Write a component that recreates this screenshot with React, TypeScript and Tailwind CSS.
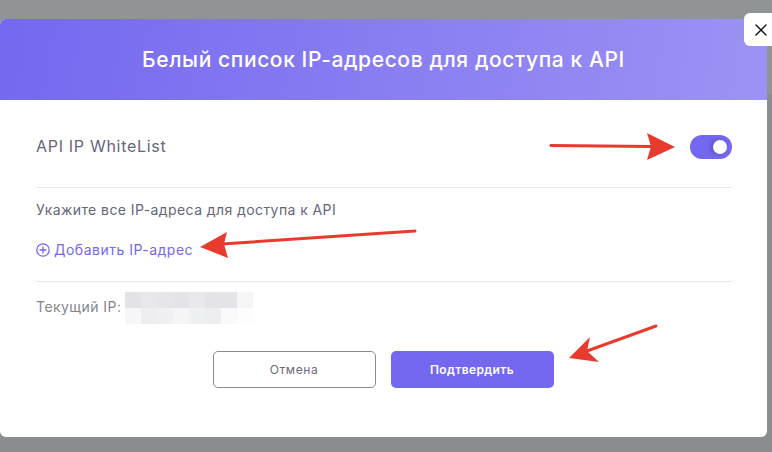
import React from "react";
import { X } from "lucide-react";

const font = "font-['Inter','Liberation_Sans',sans-serif]";

const blurTop = ["bg-[#e2e2e7]", "bg-[#e8e8eb]", "bg-[#e6e6ea]", "bg-[#e3e3e8]", "bg-[#e9e9ec]", "bg-[#e3e3e8]", "bg-[#e5e5e9]", "bg-[#f6f6f7]"];
const blurBottom = ["bg-[#f6f6f8]", "bg-[#eeeef0]", "bg-[#f0f0f2]", "bg-[#f5f5f6]", "bg-[#eff0f1]", "bg-[#eeeef0]", "bg-[#fafafa]", "bg-[#fdfdfd]"];

const Arrows: React.FC = () => (
  <svg className="pointer-events-none absolute left-0 top-0" width="772" height="452" viewBox="0 0 772 452" fill="none">
    <path d="M551 145.5 L652 146.5" stroke="#e83b2e" strokeWidth="3" strokeLinecap="round" />
    <path d="M675 147 L647 133 L651 146.5 L647 160 Z" fill="#e83b2e" />
    <path d="M415 231 L222 244" stroke="#e83b2e" strokeWidth="3" strokeLinecap="round" />
    <path d="M200 247 L227 232 L224 244 L228 258 Z" fill="#e83b2e" />
    <path d="M656 326 L587 351" stroke="#e83b2e" strokeWidth="3" strokeLinecap="round" />
    <path d="M569 358 L590 337 L587 351 L599 362 Z" fill="#e83b2e" />
  </svg>
);

const App: React.FC = () => {
  return (
    <div className={`relative h-[452px] w-[772px] overflow-hidden bg-[linear-gradient(#919496_94px,#8b8e90_94px)] pt-[19px] ${font}`}>
      <div className="h-[418px] w-[767px] overflow-hidden rounded-md bg-white">
        <div className="flex h-[81px] items-center justify-center bg-[linear-gradient(100deg,#7468f0,#9d92f4)]">
          <h2 className="text-[21px] font-medium tracking-[0.6px] text-white">Белый список IP-адресов для доступа к API</h2>
        </div>

        <div className="pl-[36px] pr-[35px]">
          <div className="flex h-[88px] items-center justify-between border-b border-[#e9e9ec] pt-[6px]">
            <span className="pb-[2px] text-[16px] tracking-[0.7px] text-[#666679]">API IP WhiteList</span>
            <div className="flex h-[24px] w-[42px] items-center justify-end rounded-full bg-[#7468f0] pr-[5px]">
              <div className="h-[14px] w-[14px] rounded-full bg-white shadow-[-2px_0_4px_rgba(40,30,120,0.35)]" />
            </div>
          </div>

          <div className="h-[94px] border-b border-[#e9e9ec] pt-[13px]">
            <p className="text-[14px] leading-[18px] tracking-[0.42px] text-[#666679]">Укажите все IP-адреса для доступа к API</p>
            <div className="mt-[22px] flex items-center gap-[4px] text-[#7468f0]">
              <svg width="14" height="14" viewBox="0 0 14 14" fill="none" stroke="currentColor" strokeWidth="1.3">
                <circle cx="7" cy="7" r="6.2" />
                <path d="M7 3.5V10.5M3.5 7H10.5" />
              </svg>
              <span className="text-[14px] leading-[18px] tracking-[0.5px]">Добавить IP-адрес</span>
            </div>
          </div>

          <div className="flex pt-[10px]">
            <span className="pt-[6px] text-[14px] leading-[18px] tracking-[0.45px] text-[#85858f]">Текущий IP:</span>
            <div className="ml-[4px]">
              <div className="flex">
                {blurTop.map((c, i) => (
                  <div key={i} className={`h-[16px] w-[16px] ${c}`} />
                ))}
              </div>
              <div className="flex">
                {blurBottom.map((c, i) => (
                  <div key={i} className={`h-[16px] w-[16px] ${c}`} />
                ))}
              </div>
            </div>
          </div>

          <div className="mt-[27px] flex justify-center gap-[15px] pr-[2px]">
            <button className="h-[37px] w-[163px] rounded-[5px] border border-[#8a8a8f] bg-white text-[12px] tracking-[0.6px] text-[#6b6b78]">Отмена</button>
            <button className="h-[37px] w-[163px] rounded-[5px] bg-[#7468f0] text-[12px] font-semibold tracking-[0.4px] text-white">Подтвердить</button>
          </div>
        </div>
      </div>

      <button className="absolute left-[744px] top-[13px] flex h-[33px] w-[28px] items-center justify-center rounded-l-md bg-white pl-[5px] text-[#111]">
        <X size={20} strokeWidth={1.6} />
      </button>
      <Arrows />
    </div>
  );
};

export default App;
